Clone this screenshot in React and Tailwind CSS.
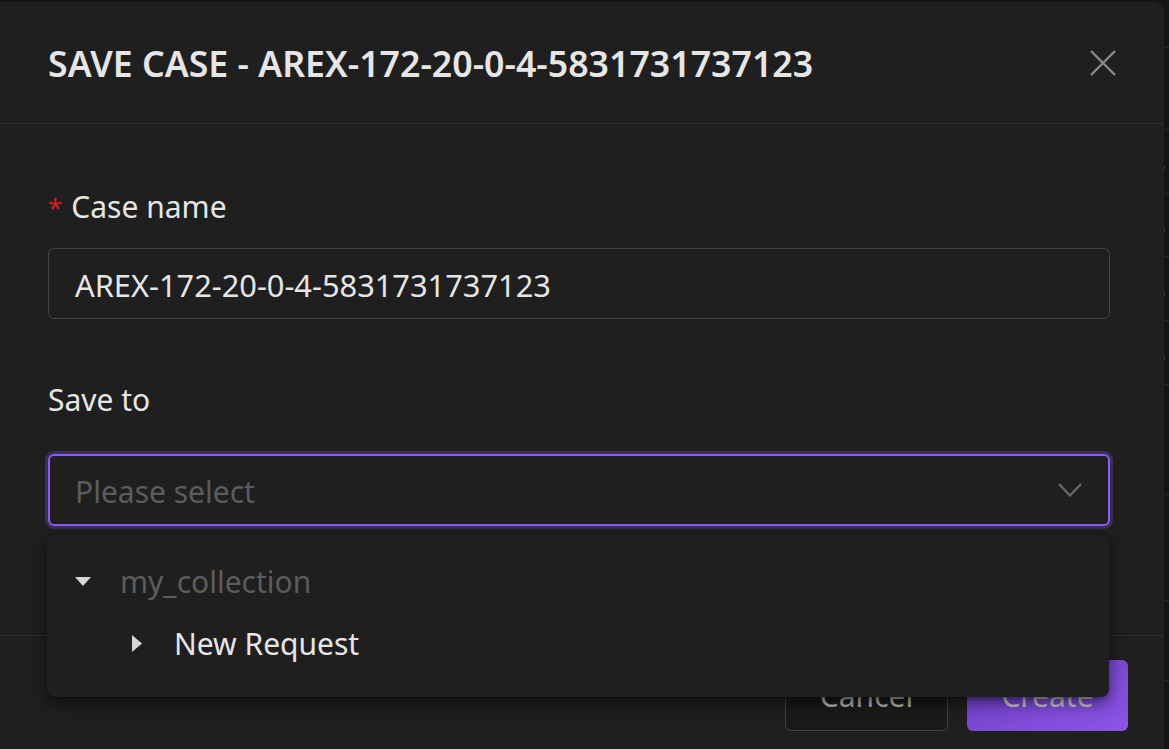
import React from 'react'

const font = { fontFamily: '"Noto Sans", "Open Sans", sans-serif' }

function CloseIcon() {
  return (
    <svg width="26" height="26" viewBox="0 0 26 26" fill="none">
      <path d="M1 1 L25 25 M25 1 L1 25" stroke="#8a8a8a" strokeWidth="2.4" />
    </svg>
  )
}

function ChevronDown() {
  return (
    <svg width="24" height="14" viewBox="0 0 24 14" fill="none">
      <path d="M1 1 L12 12.5 L23 1" stroke="#6b6b6b" strokeWidth="2.2" />
    </svg>
  )
}

function CaretDown() {
  return (
    <svg width="16" height="9" viewBox="0 0 16 9">
      <path d="M0 0 H16 L8 9 Z" fill="#d6d6d6" />
    </svg>
  )
}

function CaretRight() {
  return (
    <svg width="10" height="17" viewBox="0 0 10 17">
      <path d="M0 0 L10 8.5 L0 17 Z" fill="#d6d6d6" />
    </svg>
  )
}

// the list behind the modal, only a sliver shows on the right
const sideRows = [48, 82, 64, 63, 64, 64, 110, 106, 80]

function SideStrip() {
  return (
    <div className="flex-1 overflow-hidden flex flex-col">
      {sideRows.map((h, i) => (
        <div
          key={i}
          className="border-b border-[#262626] flex items-center shrink-0"
          style={{ height: h }}
        >
          {i > 1 && i < 6 && (
            <span className="text-[28px] text-[#5b7fb3] -ml-[14px] leading-none">3</span>
          )}
        </div>
      ))}
    </div>
  )
}

export default function App() {
  return (
    <div className="w-[1169px] h-[749px] bg-[#141414] flex overflow-hidden relative" style={font}>
      {/* modal */}
      <div className="w-[1164px] mt-[2px] bg-[#1f1f1f] rounded-tr-[10px] flex flex-col shrink-0">
        <div className="h-[122px] px-12 flex items-center justify-between border-b border-[#303030] shrink-0">
          <h1 className="text-[35.7px] font-semibold text-[#e6e6e6] pt-[2px]">
            SAVE CASE - AREX-172-20-0-4-5831731737123
          </h1>
          <button className="w-[26px] h-[26px] flex items-center justify-center">
            <CloseIcon />
          </button>
        </div>

        <div className="px-12 pt-[58px] flex flex-col">
          <label className="h-[48px] flex items-center text-[30px] text-[#e6e6e6]">
            <span className="text-[#d32029] text-[26px] mr-[9px] mt-[2px]">*</span>
            Case name
          </label>
          <div className="mt-[18px] w-[1062px] h-[71px] border border-[#424242] rounded-[6px] flex items-center pt-[4px] px-[26px] text-[30.8px] text-[#e6e6e6]">
            AREX-172-20-0-4-5831731737123
          </div>

          <label className="mt-[56px] h-[48px] flex items-center text-[30px] text-[#e6e6e6]">
            Save to
          </label>
          <div className="mt-[31px] w-[1062px] h-[72px] border-2 border-[#8b5cf6] rounded-[6px] shadow-[0_0_0_3px_rgba(139,92,246,0.25)] flex items-center justify-between pl-[25px] pr-[26px] text-[30px]">
            <span className="text-[#5c5c5c] pt-[3px]">Please select</span>
            <ChevronDown />
          </div>
        </div>

        <div className="mt-auto h-[114px] border-t border-[#303030] flex items-start justify-end gap-[19px] pt-[24px] pr-[36px] shrink-0">
          <button className="w-[163px] h-[71px] border border-[#424242] rounded-[6px] bg-[#1a1a1a] text-[30px] text-[#b3b3b3]">
            Cancel
          </button>
          <button className="w-[161px] h-[71px] rounded-[6px] bg-gradient-to-br from-[#6a3cc0] to-[#8d55e6] text-[30px] text-[#c8c8c8]">
            Create
          </button>
        </div>
      </div>

      <SideStrip />

      {/* tree select dropdown */}
      <div className="absolute left-[47px] top-[535px] w-[1062px] h-[162px] bg-[#1f1f1f] rounded-[8px] shadow-[0_6px_16px_rgba(0,0,0,0.5),0_3px_6px_-4px_rgba(0,0,0,0.6)] flex flex-col pt-[17px]">
        <div className="h-[58px] flex items-center pl-[28px]">
          <span className="w-[16px] flex justify-center"><CaretDown /></span>
          <span className="ml-[29px] text-[30px] text-[#5c5c5c]">my_collection</span>
        </div>
        <div className="h-[66px] flex items-center pl-[85px]">
          <span className="w-[10px] flex justify-center"><CaretRight /></span>
          <span className="ml-[32px] text-[30px] text-[#e6e6e6]">New Request</span>
        </div>
      </div>
    </div>
  )
}
